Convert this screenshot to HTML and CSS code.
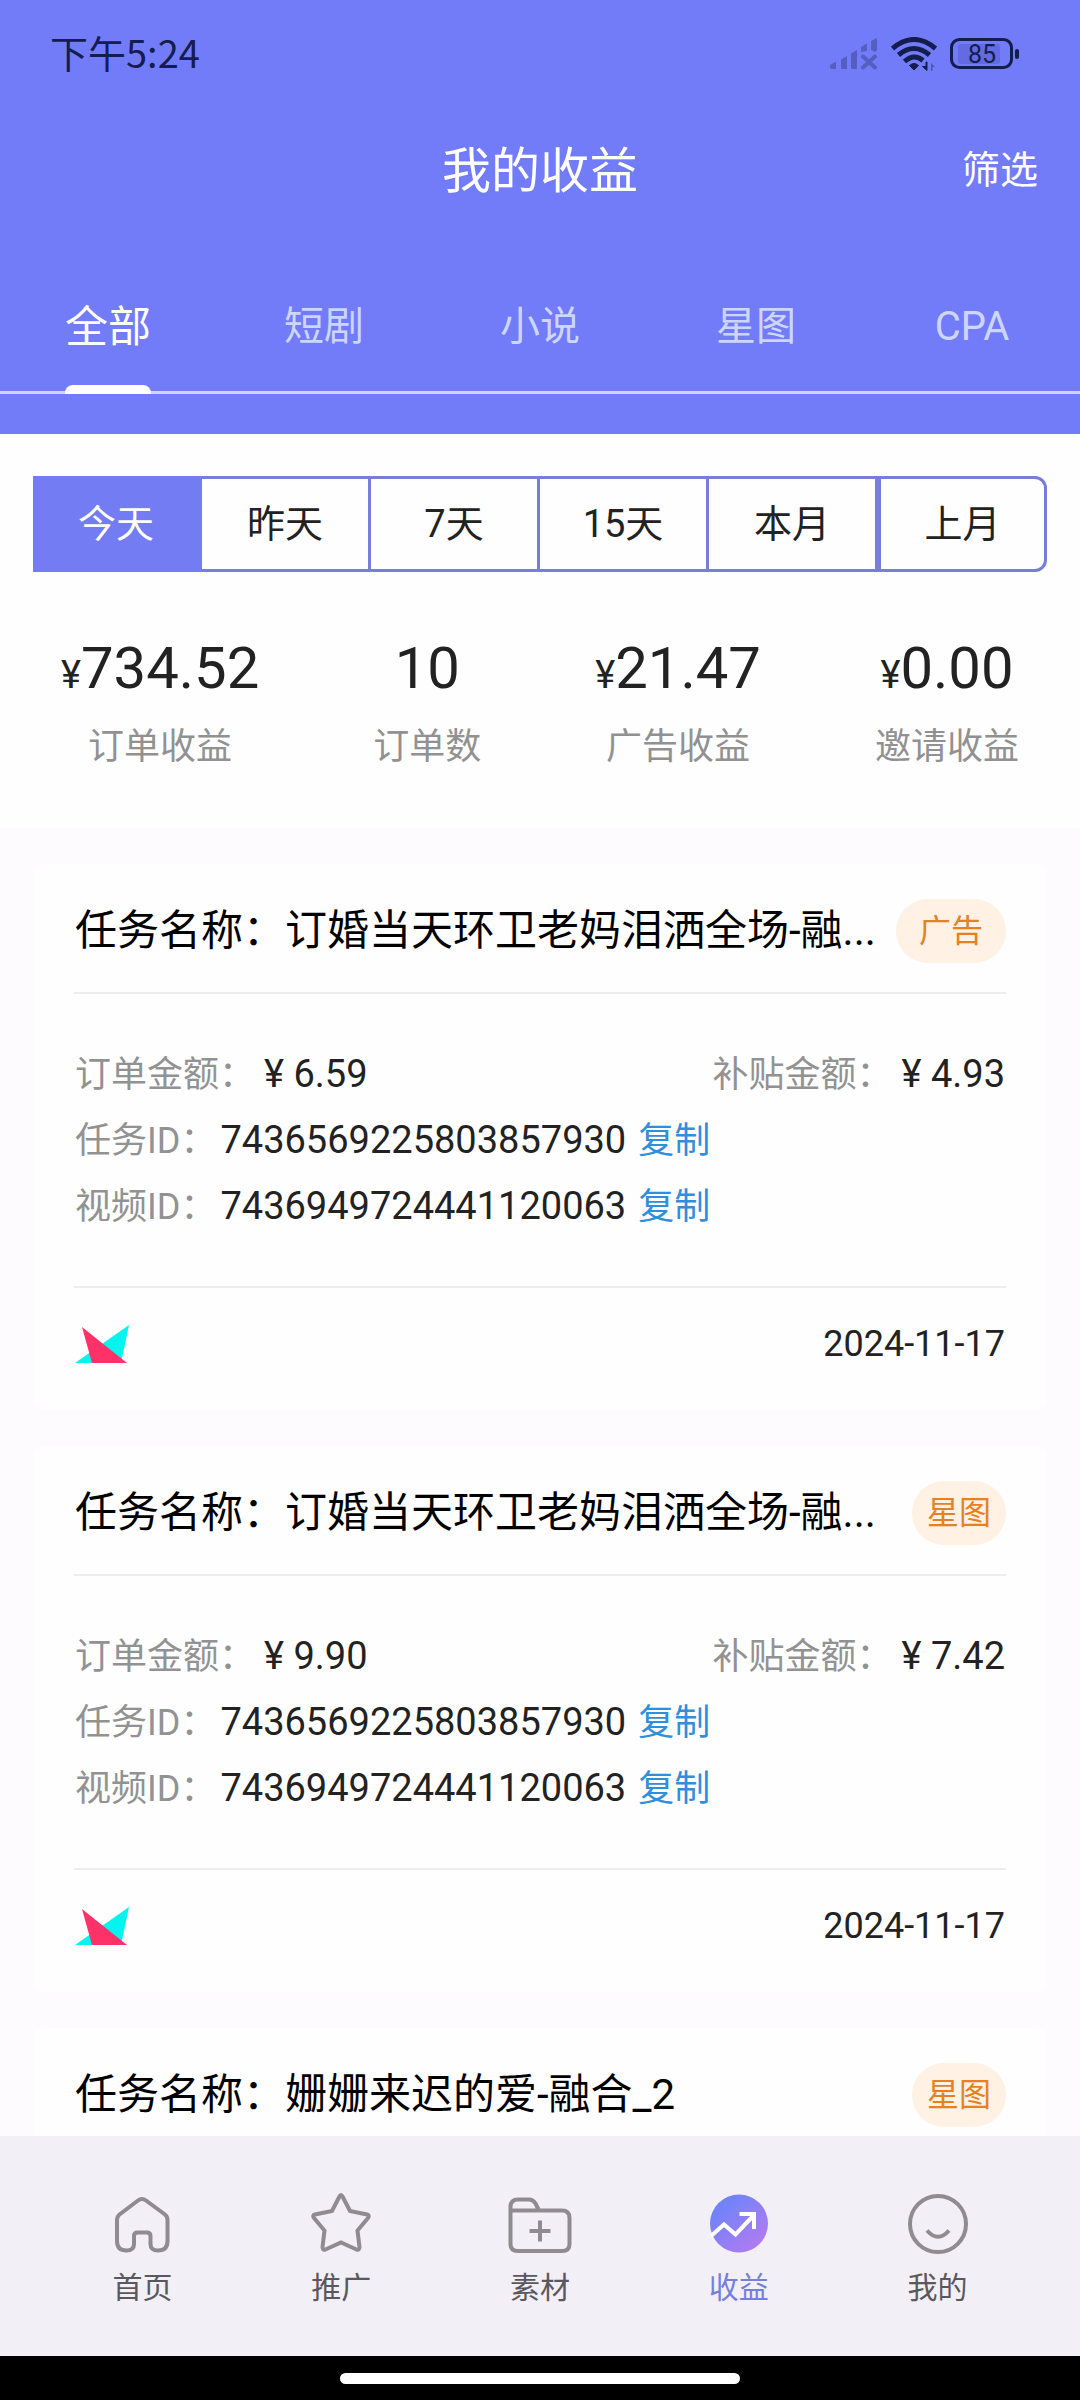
FILE: index.html
```html
<!DOCTYPE html>
<html lang="zh-CN">
<head>
<meta charset="utf-8">
<meta name="viewport" content="width=device-width, initial-scale=1">
<title>我的收益</title>
<link rel="stylesheet" href="styles.css">
</head>
<body>
<div class="app">
  <header class="header">
    <div class="status">
      <time class="clock">下午5:24</time>
      <div class="status-icons">
        <svg class="signal" width="48" height="32" viewBox="0 0 48 32" aria-hidden="true">
          <g fill="#555fc0">
            <path d="M0 27l6-3.500V31H1.500Q0 31 0 29.500zM11 21.500l6-3.500v13h-4.500q-1.500 0-1.500-1.500zM21 15.500l6-3.500v19h-4.500q-1.500 0-1.500-1.500zM31 9l6-3.500V13l-6 1zM41 3l6-3v12l-2 2-4-2z"/>
          </g>
          <path d="M33 18.500l12 11M45 18.500l-12 11" stroke="#555fc0" stroke-width="4" stroke-linecap="round"/>
        </svg>
        <svg class="wifi" width="46" height="34" viewBox="0 0 46 34" aria-hidden="true">
          <g fill="none" stroke="#141d4d" stroke-width="5">
            <path d="M1.500 11.500Q23-6.500 44.500 11.500"/>
            <path d="M7.500 18Q23 5 38.500 18"/>
            <path d="M13.500 24.500Q23 16 32 23.500"/>
          </g>
          <path d="M23 33l-4.500-4.500q4.500-4 9 0z" fill="#141d4d" stroke="#141d4d"/>
          <path d="M36 25v8.500L31.500 29.500H35V25z" fill="#141d4d" stroke="#141d4d"/>
          <path d="M40 34v-8l4 4h-2.500v4z" fill="#4b55b4"/>
        </svg>
        <svg class="battery" width="70" height="32" viewBox="0 0 70 32" aria-hidden="true">
          <rect x="8" y="6" width="42" height="20" rx="3" fill="#626be0"/>
          <rect x="1.500" y="1.500" width="60" height="28" rx="8" fill="none" stroke="#141d4d" stroke-width="3"/>
          <rect x="65" y="11" width="4" height="10" rx="2" fill="#141d4d"/>
          <text x="32" y="25" text-anchor="middle" class="battery-text">85</text>
        </svg>
      </div>
    </div>
    <div class="titlebar">
      <h1 class="title">我的收益</h1>
      <button class="filter" type="button">筛选</button>
    </div>
    <nav class="tabs" aria-label="类型">
      <a class="tab tab-active" href="#all">全部</a>
      <a class="tab" href="#drama">短剧</a>
      <a class="tab" href="#novel">小说</a>
      <a class="tab" href="#star">星图</a>
      <a class="tab" href="#cpa">CPA</a>
    </nav>
  </header>

  <section class="summary">
    <div class="ranges">
      <button class="range range-active" type="button">今天</button>
      <button class="range" type="button">昨天</button>
      <button class="range" type="button">7天</button>
      <button class="range" type="button">15天</button>
      <button class="range" type="button">本月</button>
      <button class="range range-last" type="button">上月</button>
    </div>
    <dl class="stats">
      <div class="stat"><dt class="stat-label">订单收益</dt><dd class="stat-value"><span class="yen">¥</span>734.52</dd></div>
      <div class="stat"><dt class="stat-label">订单数</dt><dd class="stat-value">10</dd></div>
      <div class="stat"><dt class="stat-label">广告收益</dt><dd class="stat-value"><span class="yen">¥</span>21.47</dd></div>
      <div class="stat"><dt class="stat-label">邀请收益</dt><dd class="stat-value"><span class="yen">¥</span>0.00</dd></div>
    </dl>
  </section>

  <main class="orders">
    <article class="card">
      <div class="card-head">
        <h2 class="card-title">任务名称：订婚当天环卫老妈泪洒全场-融...</h2>
        <span class="badge badge-wide">广告</span>
      </div>
      <div class="card-body">
        <div class="row row-split">
          <p class="pair"><span class="label">订单金额：</span><span class="amount">¥ 6.59</span></p>
          <p class="pair"><span class="label">补贴金额：</span><span class="amount">¥ 4.93</span></p>
        </div>
        <div class="row"><span class="label">任务ID：</span><span class="id">7436569225803857930</span><button class="copy" type="button">复制</button></div>
        <div class="row"><span class="label">视频ID：</span><span class="id">7436949724441120063</span><button class="copy" type="button">复制</button></div>
      </div>
      <div class="card-foot">
        <svg class="logo" width="54" height="38" viewBox="0 0 54 38" aria-hidden="true"><path d="M0 38L54 0 46 38z" fill="#00f5ee"/><path d="M7 2l45 36H17z" fill="#fe3269"/></svg>
        <time class="date">2024-11-17</time>
      </div>
    </article>
    <article class="card">
      <div class="card-head">
        <h2 class="card-title">任务名称：订婚当天环卫老妈泪洒全场-融...</h2>
        <span class="badge">星图</span>
      </div>
      <div class="card-body">
        <div class="row row-split">
          <p class="pair"><span class="label">订单金额：</span><span class="amount">¥ 9.90</span></p>
          <p class="pair"><span class="label">补贴金额：</span><span class="amount">¥ 7.42</span></p>
        </div>
        <div class="row"><span class="label">任务ID：</span><span class="id">7436569225803857930</span><button class="copy" type="button">复制</button></div>
        <div class="row"><span class="label">视频ID：</span><span class="id">7436949724441120063</span><button class="copy" type="button">复制</button></div>
      </div>
      <div class="card-foot">
        <svg class="logo" width="54" height="38" viewBox="0 0 54 38" aria-hidden="true"><path d="M0 38L54 0 46 38z" fill="#00f5ee"/><path d="M7 2l45 36H17z" fill="#fe3269"/></svg>
        <time class="date">2024-11-17</time>
      </div>
    </article>
    <article class="card">
      <div class="card-head">
        <h2 class="card-title">任务名称：姗姗来迟的爱-融合_2</h2>
        <span class="badge">星图</span>
      </div>
    </article>
  </main>

  <nav class="tabbar" aria-label="主导航">
    <a class="tabbar-item" href="#home">
      <svg class="tabbar-icon" viewBox="0 0 64 64" aria-hidden="true"><path d="M28 7.500Q32 4.500 36 7.500L55 21.500Q57.500 23.500 57.500 27V48Q57.500 57.500 48 57.500 40.500 57.500 40.500 51V43Q40.500 39.500 37 39.500H27.500Q24 39.500 24 43V51Q24 57.500 16.500 57.500 7 57.500 7 48V27Q7 23.500 9.500 21.500z"/></svg>
      首页
    </a>
    <a class="tabbar-item" href="#promote">
      <svg class="tabbar-icon" viewBox="0 2 64 64" aria-hidden="true"><path d="M30.500 5.500Q32 2.500 33.500 5.500L41 20 58 23.500Q61 24.500 59 27L48.500 39.500 50.500 56Q50.500 59.500 47.500 58.500L32 51.500 16.500 58.500Q13.500 59.500 13.500 56L15.500 39.500 5 27Q3 24.500 6 23.500L23 20z"/></svg>
      推广
    </a>
    <a class="tabbar-item" href="#material">
      <svg class="tabbar-icon" viewBox="0 1 64 64" aria-hidden="true"><path d="M2.500 19V15Q2.500 7.500 10 7.500H21Q25 7.500 27.500 11.500L31 18.500H54Q61.500 18.500 61.500 26V52Q61.500 59 54 59H10Q2.500 59 2.500 52zM2.500 18.500H31M32 28.500V49.500M21.500 39H42.500"/></svg>
      素材
    </a>
    <a class="tabbar-item tabbar-active" href="#income">
      <svg class="tabbar-icon" viewBox="0 1 64 64" aria-hidden="true">
        <defs><linearGradient id="income-fill" x1="0.150" y1="0.150" x2="0.850" y2="0.900"><stop offset="0" stop-color="#6c84fa"/><stop offset="1" stop-color="#b17bf0"/></linearGradient></defs>
        <circle cx="32" cy="31.500" r="29" fill="url(#income-fill)" stroke="none"/>
        <path d="M4 44L17 32.500 28.500 42.500 47 23M32.500 22H47V37" stroke="#fff"/>
      </svg>
      收益
    </a>
    <a class="tabbar-item" href="#me">
      <svg class="tabbar-icon" viewBox="0 1 64 64" aria-hidden="true"><circle cx="32" cy="32" r="28"/><path d="M21 38.500Q32 51 43 38.500"/></svg>
      我的
    </a>
  </nav>
  <div class="gesture"><span class="gesture-bar"></span></div>
</div>
</body>
</html>
```

FILE: styles.css
```css
* {
  box-sizing: border-box;
}

body,
h1,
h2,
p,
dl,
dd {
  margin: 0;
}

body {
  font-family: Roboto, "Noto Sans CJK SC", sans-serif;
  font-size: 36px;
  font-weight: 400;
  color: #222;
  background: #000;
}

button {
  padding: 0;
  border: 0;
  background: none;
  font: inherit;
  color: inherit;
}

a {
  color: inherit;
  text-decoration: none;
}

.app {
  display: flex;
  flex-direction: column;
  height: 100vh;
}

/* Header */
.header {
  flex: none;
  padding-bottom: 40px;
  background: #737cf8;
  color: #fff;
}

.status {
  display: flex;
  align-items: center;
  justify-content: space-between;
  height: 108px;
  padding: 0 60px 0 50px;
  color: #141d4d;
}

.clock {
  padding-bottom: 4px;
  font-family: "Noto Sans CJK SC", sans-serif;
  font-size: 38px;
  line-height: 54px;
}

.status-icons {
  display: flex;
  align-items: center;
  gap: 13px;
}

.battery-text {
  font-size: 25px;
  fill: #141d4d;
}

.titlebar {
  display: grid;
  grid-template-columns: 1fr auto 1fr;
  align-items: center;
  height: 124px;
  padding: 0 42px;
}

.title {
  grid-column: 2;
  padding-top: 4px;
  font-size: 49px;
  font-weight: 400;
  line-height: 72px;
}

.filter {
  justify-self: end;
  font-size: 38px;
  line-height: 56px;
}

.tabs {
  display: grid;
  grid-template-columns: repeat(5, 1fr);
  justify-items: center;
  height: 162px;
  border-bottom: 3px solid #cdd3fd;
}

.tab {
  display: flex;
  flex-direction: column;
  justify-content: space-between;
  height: 162px;
  padding-top: 65px;
  font-size: 40px;
  line-height: 60px;
  color: #cdd6ff;
}

.tab-active {
  font-size: 43px;
  color: #fff;
}

.tab-active::after {
  content: "";
  height: 9px;
  border-radius: 8px 8px 0 0;
  background: #fff;
}

/* Summary */
.summary {
  flex: none;
  padding: 42px 33px 54px;
  background: #fefefe;
}

.ranges {
  display: grid;
  grid-template-columns: repeat(6, 1fr);
}

.range {
  height: 96px;
  border: 3px solid #777dda;
  border-left-width: 0;
  font-size: 38px;
  line-height: 56px;
}

.range-active {
  border-color: #737cf3;
  background: #737cf3;
  color: #fff;
}

.range-last {
  border-left-width: 3px;
  border-radius: 0 12px 12px 0;
}

.stats {
  display: flex;
  justify-content: space-between;
  padding: 60px 28px 0;
}

.stat {
  display: flex;
  flex-direction: column-reverse;
  align-items: center;
  gap: 16px;
}

.stat-value {
  height: 72px;
  font-size: 58px;
  line-height: 72px;
}

.yen {
  font-size: 38px;
  line-height: 38px;
}

.stat-label {
  line-height: 54px;
  color: #919191;
}

/* Order list */
.orders {
  flex: 1;
  display: flex;
  flex-direction: column;
  gap: 36px;
  min-height: 0;
  padding: 36px 33px;
  overflow-y: auto;
  scrollbar-width: none;
  background: #fefbff;
}

.card {
  flex: none;
  padding: 0 41px;
  border-radius: 12px;
  background: #fefefe;
}

.card-head {
  display: flex;
  align-items: center;
  justify-content: space-between;
  gap: 8px;
  height: 130px;
  padding: 6px 0 0 1px;
  border-bottom: 2px solid #ededed;
}

.card-title {
  flex: 1;
  min-width: 0;
  overflow: hidden;
  font-size: 42px;
  font-weight: 400;
  line-height: 60px;
  color: #000;
  white-space: nowrap;
  text-overflow: ellipsis;
}

.badge {
  padding: 0 15px;
  border-radius: 32px;
  background: #fff1e4;
  font-size: 32px;
  line-height: 64px;
  color: #e5821f;
}

.badge-wide {
  padding: 0 23px;
}

.card-body {
  padding: 47px 1px;
  border-bottom: 2px solid #ededed;
}

.row {
  display: flex;
  align-items: baseline;
  height: 66px;
  line-height: 66px;
}

.row-split {
  justify-content: space-between;
}

.pair {
  display: flex;
  align-items: baseline;
  gap: 9px;
}

.label {
  color: #929292;
}

.amount {
  font-size: 38px;
}

.id {
  margin: 0 12px 0 4px;
  font-size: 38px;
}

.copy {
  color: #2f8fdb;
}

.card-foot {
  display: flex;
  align-items: center;
  justify-content: space-between;
  height: 122px;
  padding: 0 1px 10px;
}

.date {
  line-height: 54px;
}

/* Bottom navigation */
.tabbar {
  flex: none;
  display: grid;
  grid-template-columns: repeat(5, 1fr);
  height: 220px;
  padding: 57px 43px 0;
  background: #f2eff6;
}

.tabbar-item {
  display: flex;
  flex-direction: column;
  align-items: center;
  gap: 8px;
  font-size: 30px;
  line-height: 46px;
  color: #5a585d;
}

.tabbar-icon {
  width: 64px;
  height: 64px;
  fill: none;
  stroke: #8f8b91;
  stroke-width: 4;
}

.tabbar-active {
  color: #7480dc;
}

.gesture {
  flex: none;
  display: flex;
  align-items: center;
  justify-content: center;
  height: 44px;
  background: #000;
}

.gesture-bar {
  width: 37%;
  height: 11px;
  border-radius: 6px;
  background: #fff;
}
```
